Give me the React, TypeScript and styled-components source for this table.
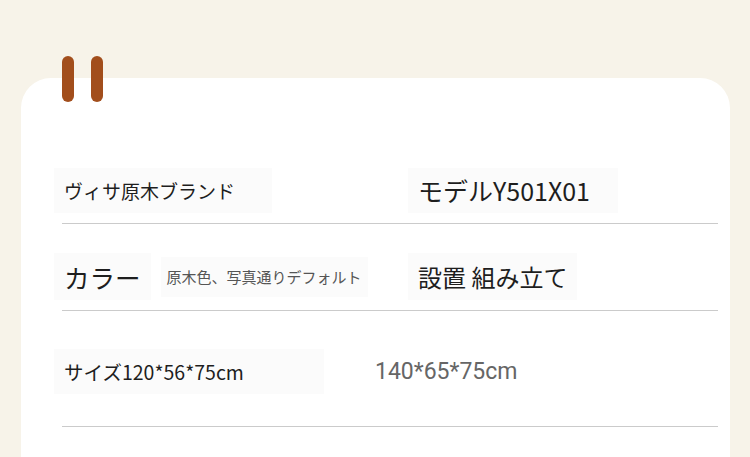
import React from "react";
import styled, { createGlobalStyle } from "styled-components";

const Global = createGlobalStyle`
  html, body { margin: 0; padding: 0; }
  body {
    background: #f7f3e9;
    width: 750px;
    height: 457px;
    overflow: hidden;
    font-family: "Noto Sans CJK JP", "Noto Sans", sans-serif;
    color: #222;
  }
`;

const Page = styled.div`
  padding: 78px 20px 0 21px;
`;

const Card = styled.div`
  position: relative;
  background: #ffffff;
  border-radius: 30px 30px 0 0;
  padding: 90px 12px 0 41px;
  height: 289px;
`;

const Rings = styled.div`
  position: absolute;
  top: -22px;
  left: 41px;
  display: flex;
  gap: 17px;
`;

const Ring = styled.span`
  display: block;
  width: 12px;
  height: 46px;
  border-radius: 6px;
  background: #a24e1c;
`;

const Table = styled.div`
  display: flex;
  flex-direction: column;
`;

const Row = styled.div<{ $split: number; $top: number; $bottom: number }>`
  display: grid;
  grid-template-columns: ${(p) => p.$split}px 1fr;
  align-items: center;
  padding-top: ${(p) => p.$top}px;
  padding-bottom: ${(p) => p.$bottom}px;
  border-bottom: 1px solid #cbcbcb;
`;

const Cell = styled.div`
  display: flex;
  align-items: center;
  gap: 10px;
`;

const Chip = styled.span<{ $size: number; $h: number; $tone?: "dark" | "soft"; $lead?: boolean }>`
  display: inline-flex;
  align-items: center;
  height: ${(p) => p.$h}px;
  padding: 0 ${(p) => (p.$tone === "soft" ? 6 : 10)}px;
  margin-left: ${(p) => (p.$lead ? -8 : 0)}px;
  background: #fbfbfb;
  font-size: ${(p) => p.$size}px;
  font-weight: 400;
  color: ${(p) => (p.$tone === "soft" ? "#555" : "#1e1e1e")};
  white-space: nowrap;
  line-height: 1;
`;

const Plain = styled.span`
  font-family: Roboto, "Noto Sans", sans-serif;
  font-size: 23px;
  color: #666;
  white-space: nowrap;
  line-height: 1;
`;

export default function App() {
  return (
    <>
      <Global />
      <Page>
        <Card>
          <Rings>
            <Ring />
            <Ring />
          </Rings>
          <Table>
            <Row $split={354} $top={0} $bottom={10}>
              <Cell>
                <Chip $lead $size={19} $h={45} style={{ paddingRight: 37 }}>ヴィサ原木ブランド</Chip>
              </Cell>
              <Cell>
                <Chip $lead $size={25} $h={45} style={{ paddingRight: 28 }}>モデルY501X01</Chip>
              </Cell>
            </Row>
            <Row $split={354} $top={29} $bottom={10}>
              <Cell>
                <Chip $lead $size={25.5} $h={47}>カラー</Chip>
                <Chip $tone="soft" $size={15} $h={40}>原木色、写真通りデフォルト</Chip>
              </Cell>
              <Cell>
                <Chip $lead $size={24} $h={47}>設置 組み立て</Chip>
              </Cell>
            </Row>
            <Row $split={313} $top={38} $bottom={32}>
              <Cell>
                <Chip $lead $size={19.5} $h={45} style={{ paddingRight: 80 }}>サイズ120*56*75cm</Chip>
              </Cell>
              <Cell>
                <Plain>140*65*75cm</Plain>
              </Cell>
            </Row>
          </Table>
        </Card>
      </Page>
    </>
  );
}
